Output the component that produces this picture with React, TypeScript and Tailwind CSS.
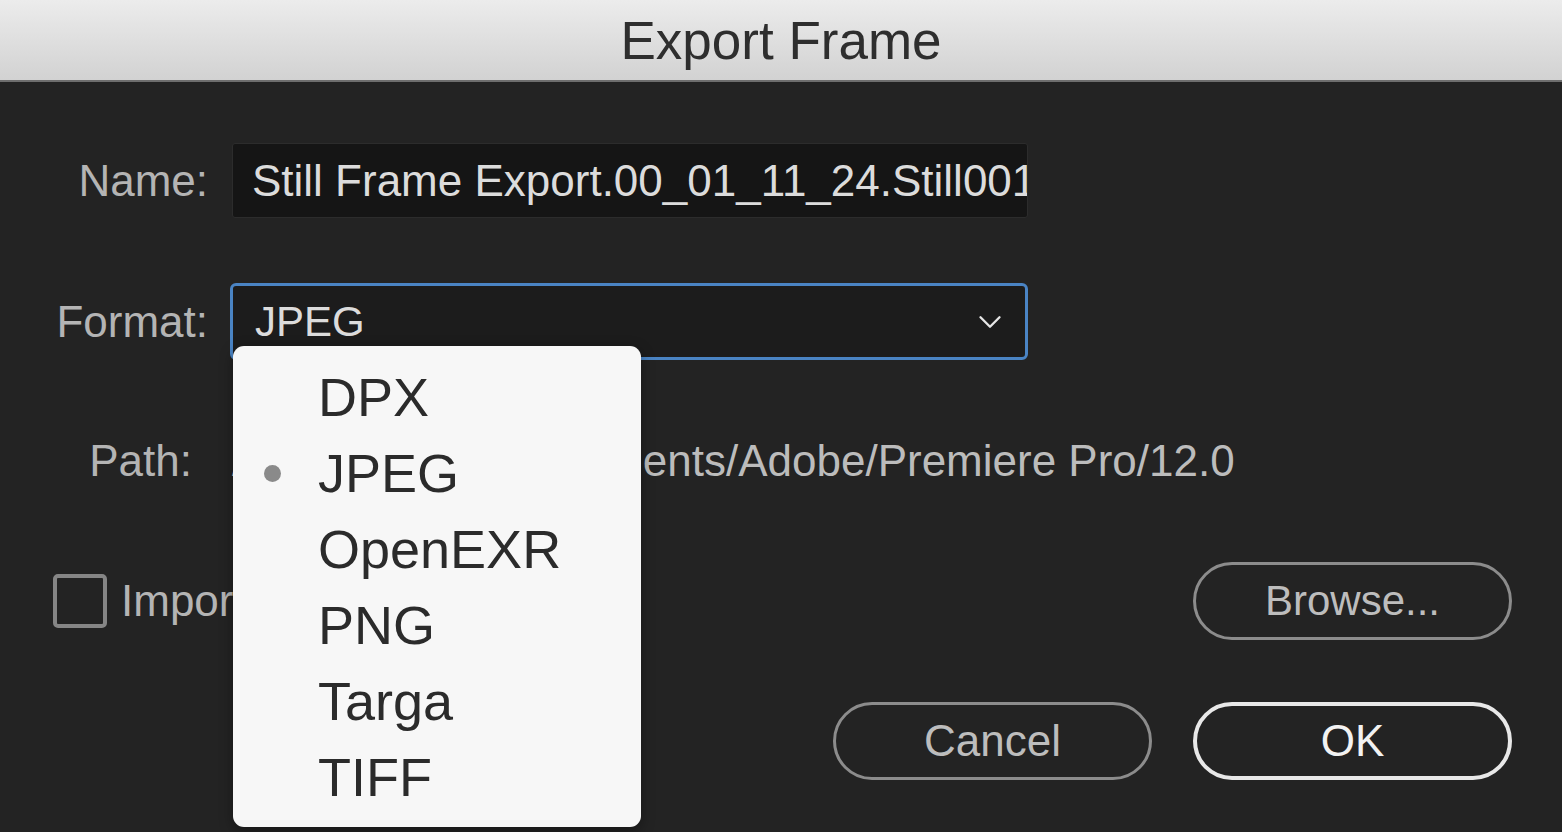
import { ChevronDown } from 'lucide-react';

const formats = ['DPX', 'JPEG', 'OpenEXR', 'PNG', 'Targa', 'TIFF'];

export default function App() {
    const selected = 'JPEG';

    return (
        <div className="w-[1562px] h-[832px] overflow-hidden bg-[#232323] flex flex-col font-['Liberation_Sans',Arial,sans-serif]">
            {/* Title bar */}
            <div className="h-[82px] shrink-0 flex items-center justify-center bg-gradient-to-b from-[#ececec] to-[#d2d2d2] border-b-2 border-[#6e6e6e]">
                <span className="text-[53px] text-[#2e2e2e] leading-none">Export Frame</span>
            </div>

            {/* Body */}
            <div className="flex-1 flex flex-col pt-[61px]">
                {/* Name */}
                <div className="flex items-center">
                    <div className="w-[208px] text-right text-[44px] text-[#b4b4b4] leading-none">Name:</div>
                    <div className="ml-[24px] w-[796px] h-[75px] bg-[#151515] border border-[#2c2c2c] rounded-[3px] flex items-center pl-[19px] overflow-hidden">
                        <span className="text-[44px] text-[#dcdcdc] whitespace-nowrap leading-none">Still Frame Export.00_01_11_24.Still001.jpg</span>
                    </div>
                </div>

                {/* Format */}
                <div className="flex items-center mt-[65px]">
                    <div className="w-[208px] text-right text-[44px] text-[#b4b4b4] leading-none">Format:</div>
                    <div className="relative ml-[22px]">
                        <div className="w-[798px] h-[77px] border-[3px] border-[#4a84c4] rounded-[6px] bg-[#1c1c1c] flex items-center justify-between pl-[22px] pr-[16px]">
                            <span className="text-[42px] text-[#dcdcdc] leading-none">{selected}</span>
                            <ChevronDown className="w-[38px] h-[38px] text-[#e6e6e6]" strokeWidth={1.5} />
                        </div>

                        {/* Dropdown menu */}
                        <div className="absolute left-[3px] top-[63px] w-[408px] h-[481px] bg-[#f7f7f7] rounded-[11px] shadow-[0_4px_14px_rgba(0,0,0,0.35)] pt-[13px] z-10">
                            {formats.map(f => (
                                <div key={f} className="h-[76px] flex items-center">
                                    <div className="w-[85px] flex justify-start pl-[31px]">
                                        {f === selected && <span className="w-[17px] h-[17px] rounded-full bg-[#8a8a8a]" />}
                                    </div>
                                    <span className="text-[54px] text-[#2b2b2b] leading-none">{f}</span>
                                </div>
                            ))}
                        </div>
                    </div>
                </div>

                {/* Path */}
                <div className="flex items-center mt-[71px] h-[60px]">
                    <div className="w-[192px] text-right text-[44px] text-[#b4b4b4] leading-none">Path:</div>
                    <div className="ml-[40px] text-[44px] text-[#bcbcbc] whitespace-nowrap leading-none">/Users/admin/Documents/Adobe/Premiere Pro/12.0</div>
                </div>

                {/* Import + Browse */}
                <div className="flex items-center justify-between mt-[71px] pl-[53px] pr-[50px]">
                    <div className="flex items-center gap-[14px]">
                        <div className="w-[54px] h-[54px] border-[4px] border-[#858585] rounded-[5px]" />
                        <span className="text-[44px] text-[#b4b4b4] leading-none">Import into project</span>
                    </div>
                    <button className="w-[319px] h-[78px] rounded-full border-[3px] border-[#8c8c8c] text-[42px] text-[#bdbdbd] leading-none">
                        Browse...
                    </button>
                </div>

                {/* Cancel / OK */}
                <div className="flex justify-end gap-[41px] mt-[62px] pr-[50px]">
                    <button className="w-[319px] h-[78px] rounded-full border-[3px] border-[#8c8c8c] text-[44px] text-[#bdbdbd] leading-none">
                        Cancel
                    </button>
                    <button className="w-[319px] h-[78px] rounded-full border-[4px] border-[#e8e8e8] text-[44px] text-[#f2f2f2] leading-none">
                        OK
                    </button>
                </div>
            </div>
        </div>
    );
}
